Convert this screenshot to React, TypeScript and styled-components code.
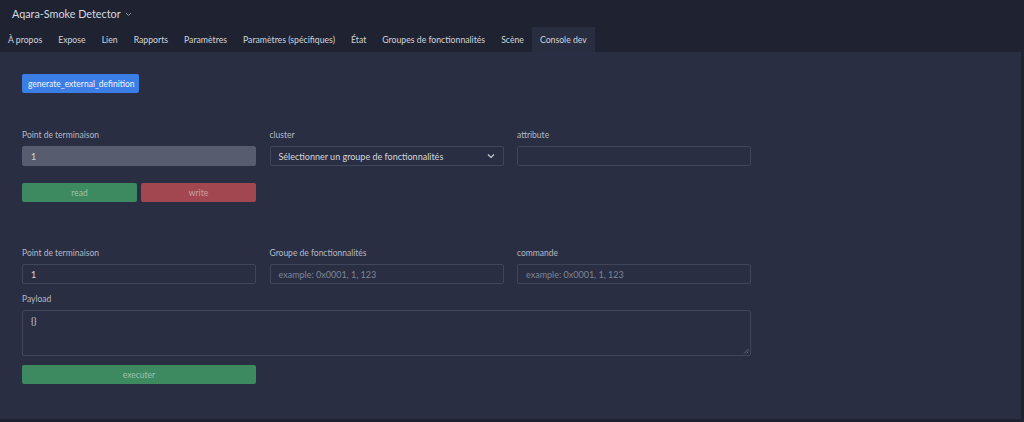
import styled, { createGlobalStyle } from 'styled-components';

const GlobalStyle = createGlobalStyle`
   html, body {
      margin: 0;
      padding: 0;
      background: #292e42;
   }
   * {
      box-sizing: border-box;
   }
`;

const Page = styled.div`
   height: 422px;
   display: flex;
   flex-direction: column;
   font-family: Lato, 'Open Sans', sans-serif;
   color: #c9ccd6;
   border-right: 3px solid #1f2331;
   border-bottom: 3px solid #1f2331;
   background: #292e42;
`;

const Header = styled.header`
   background: #1f2331;
   display: flex;
   flex-direction: column;
`;

const TitleRow = styled.div`
   height: 27px;
   display: flex;
   align-items: center;
   padding: 0 12px;
   font-size: 10.8px;
   color: #d7dae2;
   gap: 4px;
`;

const Chevron = styled.svg`
   margin-top: 2px;
`;

const TabBar = styled.nav`
   height: 25px;
   display: flex;
   align-items: stretch;
`;

const Tab = styled.div<{ $active?: boolean }>`
   display: flex;
   align-items: center;
   padding: 0 8px;
   font-size: 8.7px;
   color: #d0d3dc;
   white-space: nowrap;
   background: ${(p) => (p.$active ? '#282d40' : 'transparent')};
`;

const Main = styled.main`
   flex: 1;
   padding: 22px 22px 0;
   display: flex;
   flex-direction: column;
`;

const Button = styled.button<{ $tone: 'blue' | 'green' | 'red' }>`
   height: 19px;
   border: none;
   border-radius: 2px;
   font-family: inherit;
   font-size: 8.5px;
   padding: 0 6px;
   color: ${(p) => (p.$tone === 'blue' ? '#f2f6ff' : 'rgba(235, 240, 240, 0.55)')};
   background: ${(p) =>
      p.$tone === 'blue' ? '#3b7ee6' : p.$tone === 'green' ? '#3e8a60' : '#a2474f'};
`;

const TopButton = styled(Button)`
   align-self: flex-start;
   width: 117px;
   white-space: nowrap;
`;

const Grid = styled.div<{ $top: number }>`
   display: grid;
   grid-template-columns: repeat(3, 234px);
   column-gap: 13.5px;
   margin-top: ${(p) => p.$top}px;
`;

const Field = styled.div`
   display: flex;
   flex-direction: column;
`;

const Label = styled.label`
   font-size: 8.5px;
   line-height: 12px;
   height: 12px;
   color: #b5b9c6;
   margin-bottom: 5px;
`;

const Input = styled.div<{ $disabled?: boolean }>`
   height: 20px;
   display: flex;
   align-items: center;
   padding: 0 8px;
   font-size: 9px;
   color: #d4d7df;
   border-radius: 2px;
   background: ${(p) => (p.$disabled ? '#575c6e' : '#292e42')};
   border: 1px solid ${(p) => (p.$disabled ? '#575c6e' : '#40465a')};
`;

const Placeholder = styled.span`
   color: #7f8597;
`;

const Select = styled(Input)`
   justify-content: space-between;
`;

const ButtonRow = styled.div`
   display: flex;
   gap: 4px;
   width: 234px;
   margin-top: 17px;
   & > * {
      flex: 1;
   }
`;

const PayloadField = styled(Field)`
   margin-top: 9px;
   width: 729px;
`;

const TextArea = styled.div`
   position: relative;
   height: 46px;
   border: 1px solid #40465a;
   border-radius: 2px;
   padding: 4px 8px;
   font-size: 9px;
   color: #d4d7df;
`;

const Grip = styled.svg`
   position: absolute;
   right: 1px;
   bottom: 1px;
`;

const ExecButton = styled(Button)`
   width: 234px;
   margin-top: 9px;
`;

const tabs = [
   'À propos',
   'Expose',
   'Lien',
   'Rapports',
   'Paramètres',
   'Paramètres (spécifiques)',
   'État',
   'Groupes de fonctionnalités',
   'Scène',
   'Console dev',
];

export default function App() {
   return (
      <>
         <GlobalStyle />
         <Page>
            <Header>
               <TitleRow>
                  Aqara-Smoke Detector
                  <Chevron width="7" height="5" viewBox="0 0 7 5">
                     <path d="M1 1 L3.5 3.5 L6 1" fill="none" stroke="#8d93a5" strokeWidth="1" />
                  </Chevron>
               </TitleRow>
               <TabBar>
                  {tabs.map((t) => (
                     <Tab key={t} $active={t === 'Console dev'}>
                        {t}
                     </Tab>
                  ))}
               </TabBar>
            </Header>
            <Main>
               <TopButton $tone="blue">generate_external_definition</TopButton>

               <Grid $top={36}>
                  <Field>
                     <Label>Point de terminaison</Label>
                     <Input $disabled>1</Input>
                  </Field>
                  <Field>
                     <Label>cluster</Label>
                     <Select>
                        Sélectionner un groupe de fonctionnalités
                        <svg width="8" height="6" viewBox="0 0 8 6">
                           <path d="M1 1.5 L4 4.5 L7 1.5" fill="none" stroke="#c9ccd6" strokeWidth="1.2" />
                        </svg>
                     </Select>
                  </Field>
                  <Field>
                     <Label>attribute</Label>
                     <Input />
                  </Field>
               </Grid>

               <ButtonRow>
                  <Button $tone="green">read</Button>
                  <Button $tone="red">write</Button>
               </ButtonRow>

               <Grid $top={45}>
                  <Field>
                     <Label>Point de terminaison</Label>
                     <Input>1</Input>
                  </Field>
                  <Field>
                     <Label>Groupe de fonctionnalités</Label>
                     <Input>
                        <Placeholder>example: 0x0001, 1, 123</Placeholder>
                     </Input>
                  </Field>
                  <Field>
                     <Label>commande</Label>
                     <Input>
                        <Placeholder>example: 0x0001, 1, 123</Placeholder>
                     </Input>
                  </Field>
               </Grid>

               <PayloadField>
                  <Label>Payload</Label>
                  <TextArea>
                     {'{}'}
                     <Grip width="6" height="6" viewBox="0 0 6 6">
                        <path d="M5.5 1 L1 5.5 M5.5 3.5 L3.5 5.5" stroke="#6c7285" strokeWidth="0.8" />
                     </Grip>
                  </TextArea>
               </PayloadField>

               <ExecButton $tone="green">executer</ExecButton>
            </Main>
         </Page>
      </>
   );
}
